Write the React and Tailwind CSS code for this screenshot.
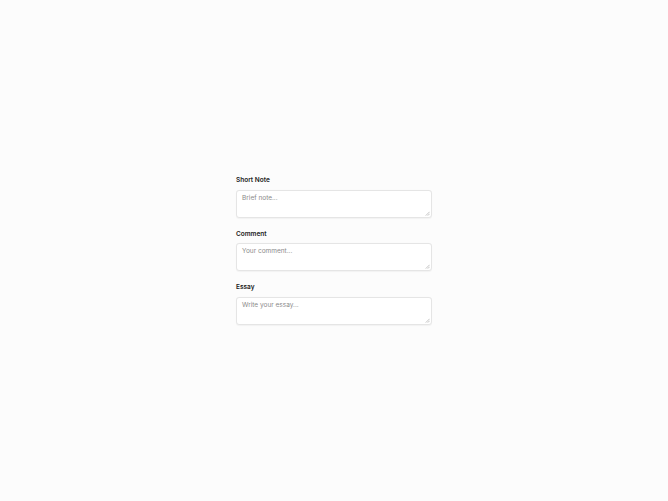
const fields = [
  { id: 'short', label: 'Short Note', placeholder: 'Brief note...' },
  { id: 'comment', label: 'Comment', placeholder: 'Your comment...' },
  { id: 'essay', label: 'Essay', placeholder: 'Write your essay...' },
];

// small diagonal resize grip, drawn over the textarea corner
function Grip() {
  return (
    <svg
      className="pointer-events-none absolute right-[2px] bottom-[2px]"
      width="5"
      height="5"
      viewBox="0 0 5 5"
    >
      <path d="M4.6 0.8 L0.8 4.6 M4.6 2.8 L2.8 4.6" stroke="#9a9a9a" strokeWidth="0.6" />
    </svg>
  );
}

export default function App() {
  return (
    <div className="min-h-screen flex items-center justify-center bg-[#fcfcfc] font-['Inter',sans-serif]">
      <div className="w-[196px] flex flex-col gap-[11px] -mt-[1px]">
        {fields.map((f) => (
          <div key={f.id} className="flex flex-col gap-[4.5px]">
            <label
              htmlFor={f.id}
              className="block text-[6.5px] leading-[10px] font-semibold text-[#1a1a1a]"
            >
              {f.label}
            </label>
            <div className="relative">
              <textarea
                id={f.id}
                placeholder={f.placeholder}
                className="block w-full h-[28px] resize-none rounded-[3px] border border-[#e5e5e5] bg-white px-[5px] py-[2px] text-[6.5px] leading-[10px] text-[#1a1a1a] placeholder:text-[#8a8a8a] shadow-[0_0.5px_1px_rgba(0,0,0,0.04)] outline-none"
              />
              <Grip />
            </div>
          </div>
        ))}
      </div>
    </div>
  );
}
